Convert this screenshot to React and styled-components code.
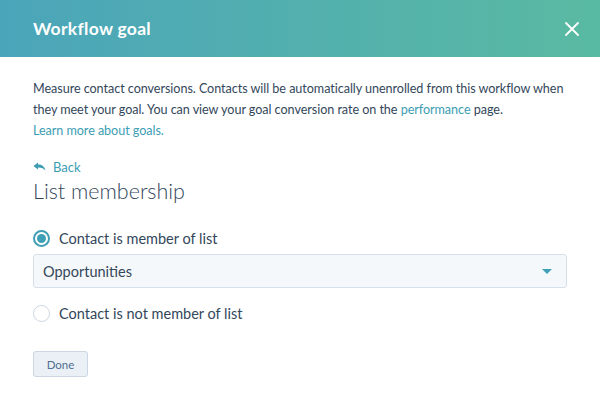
import styled, { createGlobalStyle } from "styled-components";

const GlobalStyle = createGlobalStyle`
  html, body {
    margin: 0;
    padding: 0;
    background: #fff;
  }
  body {
    font-family: Lato, "Open Sans", sans-serif;
    color: #33475b;
  }
`;

const Dialog = styled.div`
  width: 600px;
  height: 420px;
  background: #fff;
  display: flex;
  flex-direction: column;
`;

const Header = styled.div`
  height: 57px;
  flex: none;
  display: flex;
  align-items: center;
  justify-content: space-between;
  padding: 0 20px 0 33px;
  background-image: linear-gradient(90deg, #4ba5ba, #59baa2);
`;

const Title = styled.h1`
  margin: 0;
  font-size: 17.5px;
  font-weight: 700;
  letter-spacing: 0.3px;
  color: #fff;
`;

const CloseButton = styled.button`
  border: 0;
  background: none;
  padding: 0;
  width: 16px;
  height: 16px;
  display: flex;
  cursor: pointer;
`;

const Body = styled.div`
  padding: 21px 33px 0;
  display: flex;
  flex-direction: column;
`;

const Intro = styled.p`
  margin: 0;
  font-size: 12.6px;
  letter-spacing: -0.05px;
  line-height: 21px;
  color: #33475b;
`;

const Line = styled.span`
  display: block;
  white-space: nowrap;
`;

const Link = styled.a`
  color: #3c9db3;
  text-decoration: none;
`;

const BackLink = styled.a`
  margin-top: 17px;
  display: flex;
  align-items: center;
  gap: 7px;
  font-size: 13px;
  line-height: 18px;
  color: #3c9db3;
`;

const Heading = styled.h2`
  margin: 1px 0 0;
  font-size: 21.5px;
  font-weight: 300;
  line-height: 28px;
  color: #33475b;
`;

const Options = styled.div`
  margin-top: 23px;
  display: flex;
  flex-direction: column;
`;

const RadioRow = styled.label`
  display: flex;
  align-items: center;
  gap: 9px;
  height: 20px;
  font-size: 14.5px;
  color: #33475b;
  margin-top: ${(p) => p.$top || 0}px;
`;

const RadioDot = styled.span`
  width: 17px;
  height: 17px;
  box-sizing: border-box;
  border-radius: 50%;
  border: ${(p) => (p.$checked ? "2px solid #3fa0b5" : "1px solid #cbd6e2")};
  background: #fff;
  display: flex;
  align-items: center;
  justify-content: center;
  &::after {
    content: "";
    width: 9px;
    height: 9px;
    border-radius: 50%;
    background: ${(p) => (p.$checked ? "#3fa0b5" : "transparent")};
  }
`;

const Select = styled.div`
  margin-top: 6px;
  height: 34px;
  box-sizing: border-box;
  border: 1px solid #d6e0ea;
  border-radius: 3px;
  background: #f5f8fa;
  display: flex;
  align-items: center;
  justify-content: space-between;
  padding: 0 14px 0 9px;
  font-size: 14.5px;
  color: #33475b;
`;

const Caret = styled.span`
  width: 0;
  height: 0;
  border-left: 5px solid transparent;
  border-right: 5px solid transparent;
  border-top: 5px solid #3fa0b5;
`;

const DoneButton = styled.button`
  margin-top: 28px;
  align-self: flex-start;
  width: 55px;
  height: 26px;
  padding: 0;
  border: 1px solid #cbd6e2;
  border-radius: 3px;
  background: #eaf0f6;
  font-family: inherit;
  font-size: 11.5px;
  color: #506e91;
`;

const App = () => {
  return (
    <Dialog>
      <GlobalStyle />
      <Header>
        <Title>Workflow goal</Title>
        <CloseButton aria-label="Close">
          <svg width="16" height="16" viewBox="0 0 16 16">
            <path d="M2 2 L14 14 M14 2 L2 14" stroke="#fff" strokeWidth="1.8" strokeLinecap="round" />
          </svg>
        </CloseButton>
      </Header>
      <Body>
        <Intro>
          <Line>
            Measure contact conversions. Contacts will be automatically unenrolled from this workflow when
          </Line>
          <Line>
            they meet your goal. You can view your goal conversion rate on the <Link>performance</Link> page.
          </Line>
          <Line>
            <Link>Learn more about goals.</Link>
          </Line>
        </Intro>
        <BackLink>
          <svg width="13" height="10" viewBox="0 0 13 10">
            <path d="M0.5 4 L5 0.5 L5 2.6 C9 2.6 11.5 4.5 12.5 8.5 C10.8 6.4 8.6 5.5 5 5.5 L5 7.5 Z" fill="#3c9db3" />
          </svg>
          Back
        </BackLink>
        <Heading>List membership</Heading>
        <Options>
          <RadioRow>
            <RadioDot $checked />
            Contact is member of list
          </RadioRow>
          <Select>
            Opportunities
            <Caret />
          </Select>
          <RadioRow $top={15}>
            <RadioDot />
            Contact is not member of list
          </RadioRow>
        </Options>
        <DoneButton>Done</DoneButton>
      </Body>
    </Dialog>
  );
};

export default App;
